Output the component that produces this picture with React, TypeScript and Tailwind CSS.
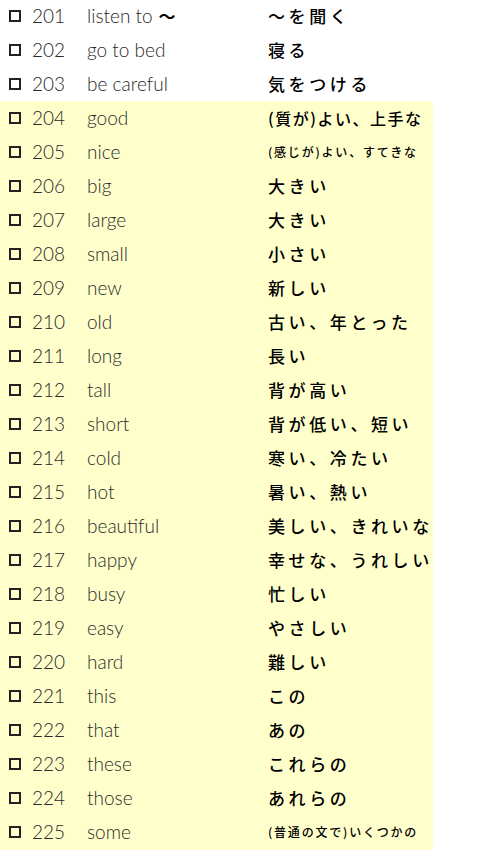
import React from 'react';

type Word = { no: number; en: string; ja: string; small?: 'tight' | 'xs' };

const words: Word[] = [
    { no: 201, en: 'listen to', ja: '～を聞く' },
    { no: 202, en: 'go to bed', ja: '寝る' },
    { no: 203, en: 'be careful', ja: '気をつける' },
    { no: 204, en: 'good', ja: '(質が)よい、上手な', small: 'tight' },
    { no: 205, en: 'nice', ja: '(感じが)よい、すてきな', small: 'xs' },
    { no: 206, en: 'big', ja: '大きい' },
    { no: 207, en: 'large', ja: '大きい' },
    { no: 208, en: 'small', ja: '小さい' },
    { no: 209, en: 'new', ja: '新しい' },
    { no: 210, en: 'old', ja: '古い、年とった' },
    { no: 211, en: 'long', ja: '長い' },
    { no: 212, en: 'tall', ja: '背が高い' },
    { no: 213, en: 'short', ja: '背が低い、短い' },
    { no: 214, en: 'cold', ja: '寒い、冷たい' },
    { no: 215, en: 'hot', ja: '暑い、熱い' },
    { no: 216, en: 'beautiful', ja: '美しい、きれいな' },
    { no: 217, en: 'happy', ja: '幸せな、うれしい' },
    { no: 218, en: 'busy', ja: '忙しい' },
    { no: 219, en: 'easy', ja: 'やさしい' },
    { no: 220, en: 'hard', ja: '難しい' },
    { no: 221, en: 'this', ja: 'この' },
    { no: 222, en: 'that', ja: 'あの' },
    { no: 223, en: 'these', ja: 'これらの' },
    { no: 224, en: 'those', ja: 'あれらの' },
    { no: 225, en: 'some', ja: '(普通の文で)いくつかの', small: 'xs' },
];

const WordRow: React.FC<{ word: Word }> = ({ word }) => {
    // Japanese meaning: long ones are set smaller / tighter
    const jaClass =
        word.small === 'xs'
            ? 'text-[12px] tracking-[1.8px]'
            : word.small === 'tight'
                ? 'text-[16px] tracking-[1.5px]'
                : 'text-[17px] tracking-[3.6px]';

    return (
        <div className="flex items-center h-[34px]">
            <span className="ml-[9px] w-[12px] h-[12px] border-2 border-[#222] flex-none" />
            <span className="ml-[11px] w-[55px] flex-none text-[19px] font-light text-[#2a2a2a]">{word.no}</span>
            <span className="w-[181px] flex-none text-[19px] font-light text-[#2a2a2a] whitespace-nowrap">
                {word.en}
                {word.no === 201 && (
                    <span className="ml-[6px] font-bold text-[17px] text-black" style={{ fontFamily: '"Noto Sans CJK JP", sans-serif' }}>～</span>
                )}
            </span>
            <span
                className={`whitespace-nowrap font-medium text-black ${jaClass}`}
                style={{ fontFamily: '"Noto Sans CJK JP", sans-serif' }}
            >
                {word.ja}
            </span>
        </div>
    );
};

export default function App() {
    const plain = words.slice(0, 3);
    const marked = words.slice(3);

    return (
        <div className="w-[500px] h-[850px] bg-white overflow-hidden" style={{ fontFamily: 'Lato, "Noto Sans CJK JP", sans-serif' }}>
            <div className="-mt-[1px]">
                {plain.map(w => <WordRow key={w.no} word={w} />)}
            </div>

            {/* highlighted block */}
            <div className="w-[433px] bg-[#ffffcc] pb-[2px]">
                {marked.map(w => <WordRow key={w.no} word={w} />)}
            </div>
        </div>
    );
}
